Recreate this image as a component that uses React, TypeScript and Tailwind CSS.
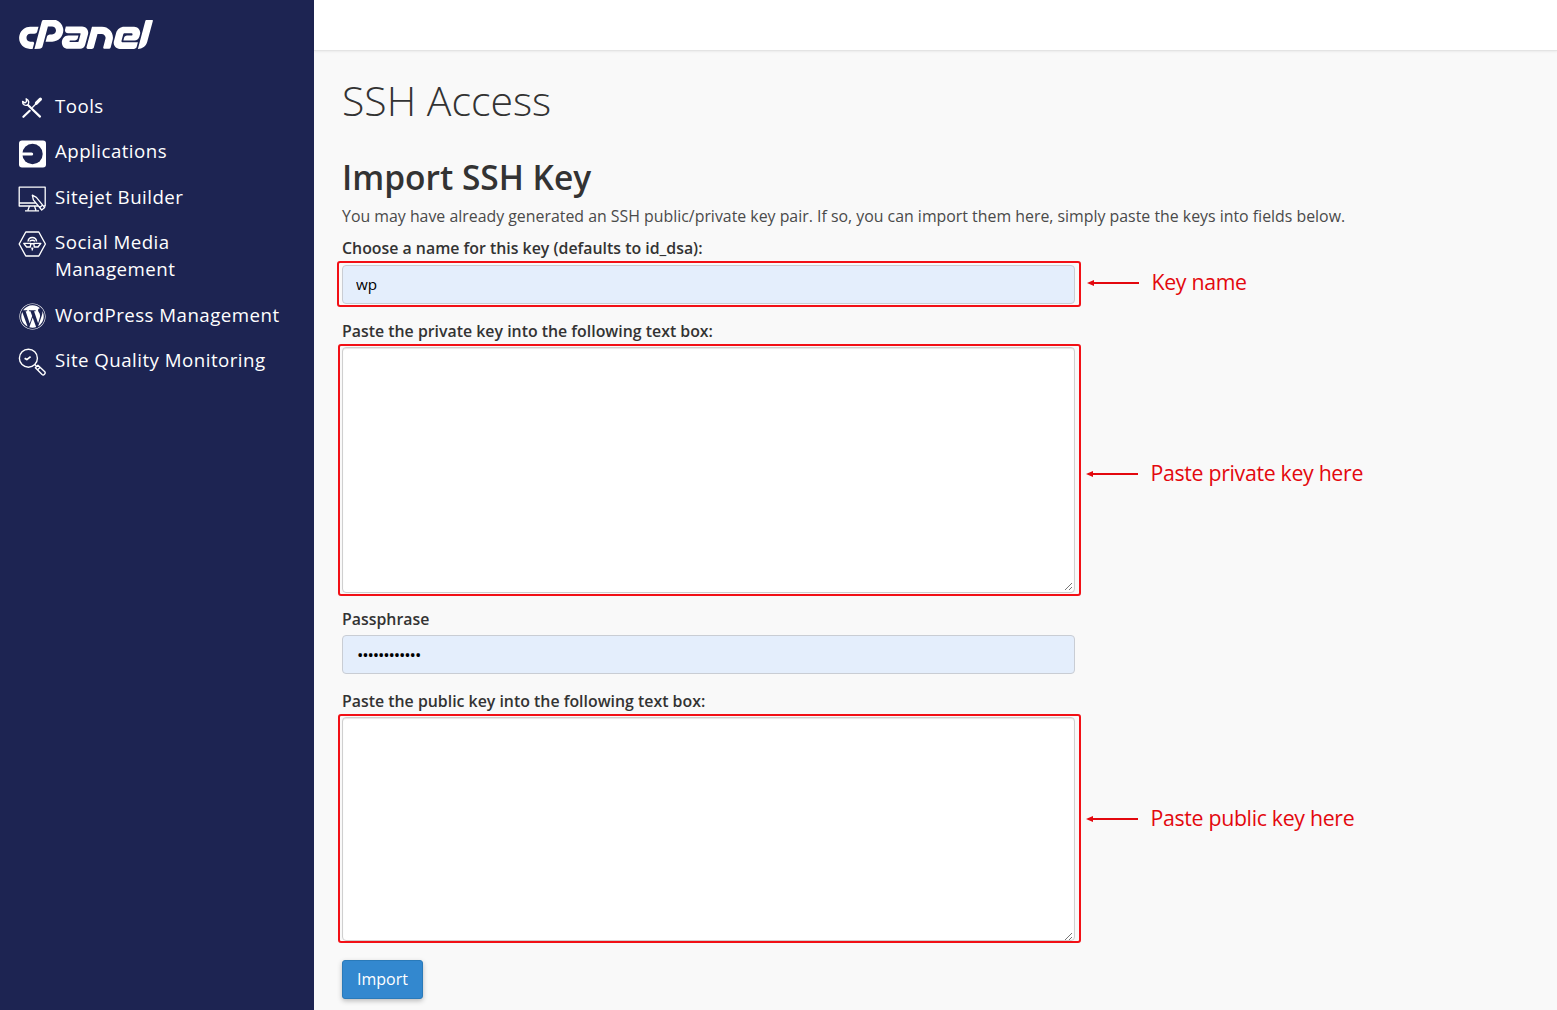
import React from 'react';
import { FaCpanel, FaWordpress } from 'react-icons/fa';

const ToolsIcon = () => (
  <svg viewBox="0 0 28 28" className="h-7 w-7" fill="none" stroke="currentColor" strokeLinecap="round">
    <path d="M10.2 11.2L22 22.6" strokeWidth="2.2" />
    <path d="M4.6 7.4c-.3 2.9 2.4 4.8 5.2 3.6 1.8-2.2 1-5.2-1.6-6.2l.4 2.6-1.7 1.5z" strokeWidth="1.4" strokeLinejoin="round" />
    <path d="M5.4 22.8l6.3-6" strokeWidth="2.2" />
    <path d="M14.6 13.2l3-3" strokeWidth="1.3" />
    <path d="M18.4 9.2l4-4" strokeWidth="3.2" />
  </svg>
);

const ApplicationsIcon = () => (
  <svg viewBox="0 0 28 28" className="h-7 w-7">
    <rect x="1" y="0.5" width="27" height="27" rx="3" fill="#fff" />
    <circle cx="14.5" cy="14" r="10.2" fill="#1d2452" />
    <path d="M3 12.4h10.6a1.6 1.6 0 0 1 0 3.2H3z" fill="#fff" />
  </svg>
);

const SitejetIcon = () => (
  <svg viewBox="0 0 28 28" className="h-7 w-7" fill="none" stroke="currentColor" strokeWidth="1.3" strokeLinejoin="round">
    <path d="M20 21H1.2V2.2h26V21h-1.5M1.2 18h16.6" />
    <path d="M11.5 21l-1.6 4.2M16.5 21l1.4 4.2M7 25.8h14" />
    <path d="M14.3 10.2l1.1 4.6 8.3 10.2 3-2.4-8.3-10.3zM21.7 22.5l3-2.4" />
  </svg>
);

const SocialIcon = () => (
  <svg viewBox="0 0 28 28" className="h-7 w-7" fill="none" stroke="currentColor" strokeWidth="1.4" strokeLinejoin="round">
    <path d="M7.8 2h13l6.6 12-6.6 12h-13L1.2 14z" />
    <path d="M10 11.5c.3-2.5 2-4 4.3-4s4 1.5 4.3 4" />
    <path d="M11.6 11.4c1-1.6 4.2-1.6 5.4 0" />
    <path d="M5.8 13.4h7l-.5 3.6H8.6zM15.8 13.4h7l-2.8 3.6h-3.7z" />
    <path d="M12.8 13.8h3M14.3 17.5v3M13.3 18.2h2" />
  </svg>
);

const QualityIcon = () => (
  <svg viewBox="0 0 28 28" className="h-7 w-7" fill="none" stroke="currentColor" strokeWidth="1.4" strokeLinejoin="round">
    <circle cx="10.4" cy="10.2" r="9" />
    <path d="M6.6 10.2l2.2 1.4 3.8-3" strokeWidth="1.8" />
    <path d="M16.8 16.6l1.8 1.8" />
    <path d="M17.4 19.8l2.5-2.6 6.9 6.6c1.2 1.4-1.2 4-2.7 2.7zM19.6 21.8l2.4-2.4" />
  </svg>
);

const navItems = [
  { label: 'Tools', icon: <ToolsIcon /> },
  { label: 'Applications', icon: <ApplicationsIcon /> },
  { label: 'Sitejet Builder', icon: <SitejetIcon /> },
  { label: 'Social Media Management', icon: <SocialIcon /> },
  { label: 'WordPress Management', icon: <FaWordpress className="ml-px h-[27px] w-[27px]" /> },
  { label: 'Site Quality Monitoring', icon: <QualityIcon /> },
];

const Sidebar = () => (
  <aside className="w-[314px] shrink-0 bg-[#1d2452] text-white">
    <div className="ml-[18.5px] mt-5 flex h-[31px] w-[134px] items-center justify-center overflow-hidden">
      <FaCpanel className="h-[107px] w-[134px] shrink-0" />
    </div>
    <nav className="mt-[41px] flex flex-col gap-[17.9px]">
      {navItems.map((item) => (
        <a key={item.label} href="#" className="flex pl-[18px]">
          <span className="mt-[2.3px] h-[25px] w-[37px] shrink-0">{item.icon}</span>
          <span className="w-[235px] text-[18.7px] leading-[27.4px] tracking-[0.47px]">
            {item.label === 'Social Media Management' ? <>Social Media<br />Management</> : item.label}
          </span>
        </a>
      ))}
    </nav>
  </aside>
);

const Note = ({ text, className }: { text: string; className: string }) => (
  <div className={`flex h-8 items-center self-start text-[#e3080e] ${className}`}>
    <svg viewBox="0 0 53 10" className="mt-0.5 h-2.5 w-[53px]">
      <path d="M5 5h47" stroke="currentColor" strokeWidth="2" />
      <path d="M0 5l7-3v6z" fill="currentColor" />
    </svg>
    <span className="-mt-px ml-[11.5px] whitespace-nowrap text-[21.3px] tracking-[-0.32px]">{text}</span>
  </div>
);

const KeyBox = ({ className, grip }: { className: string; grip: string }) => (
  <div className={`relative w-[743px] rounded-[3px] border-2 border-[#f21016] px-[2px] pt-px ${className}`}>
    <textarea className="block h-full w-[733px] resize-none rounded-[4px] border border-[#cfcfcf] bg-white shadow-[inset_0_1px_1px_rgba(0,0,0,0.1)]" />
    <svg viewBox="0 0 9 9" className={`absolute right-[6px] h-[9px] w-[9px] ${grip}`} stroke="#777" fill="none">
      <path d="M1 8l7-7M5 8l3-3" />
    </svg>
  </div>
);

function App() {
  return (
    <div className="flex h-[1010px] w-full overflow-hidden bg-[#f9f9f9] font-['Open_Sans',sans-serif] text-[#333]">
      <Sidebar />

      <div className="min-w-0 flex-1">
        <header className="h-[51px] border-b border-[#e4e4e4] bg-white shadow-[0_1px_2px_rgba(0,0,0,0.06)]" />

        <main className="pl-[28px] pt-[24px]">
          <h1 className="h-[52px] text-[41px] font-light leading-[50px]">SSH Access</h1>
          <h2 className="mt-[26px] h-12 text-[33.5px] font-semibold leading-[48px]">Import SSH Key</h2>
          <p className="h-[30px] whitespace-nowrap text-[15.88px] leading-[30px] text-[#4a4a4a]">
            You may have already generated an SSH public/private key pair. If so, you can import them here, simply paste the keys into fields below.
          </p>

          {/* Key name */}
          <label className="mt-[5px] block h-6 text-[15.88px] font-semibold leading-6">Choose a name for this key (defaults to id_dsa):</label>
          <div className="-ml-[5px] mt-px flex">
            <div className="h-[46px] w-[744px] rounded-[3px] border-2 border-[#f21016] px-[3px] py-[2px]">
              <input defaultValue="wp" className="block h-[39px] w-[733px] rounded-[4px] border border-[#c9cdd4] bg-[#e4eefc] px-[13px] pb-0.5 text-[15.2px] text-black" />
            </div>
            <Note text="Key name" className="ml-[6px] mt-[5px]" />
          </div>

          {/* Private key */}
          <label className="mt-[12px] block h-6 text-[15.88px] font-semibold leading-6">Paste the private key into the following text box:</label>
          <div className="-ml-[4px] mt-px flex">
            <KeyBox className="h-[252px] pb-px" grip="bottom-[3px]" />
            <Note text="Paste private key here" className="ml-[5px] mt-[113px]" />
          </div>

          <label className="mt-[11px] block h-6 text-[15.88px] font-semibold leading-6">Passphrase</label>
          <input
            type="password"
            defaultValue="abcdefghijkl"
            className="mt-1 block h-[39px] w-[733px] rounded-[4px] border border-[#c9cdd4] bg-[#e4eefc] px-[14px] text-[17px] tracking-[-1.13px] text-black"
          />

          {/* Public key */}
          <label className="mt-[15px] block h-6 text-[15.88px] font-semibold leading-6">Paste the public key into the following text box:</label>
          <div className="-ml-[4px] mt-px flex">
            <KeyBox className="h-[229px]" grip="bottom-0" />
            <Note text="Paste public key here" className="ml-[5px] mt-[88px]" />
          </div>

          <button className="mt-[17px] block h-[39px] w-[81px] rounded-[3px] border border-[#2a7ab9] bg-[#3388cf] pb-0.5 text-[16px] text-white shadow-[0_2px_5px_rgba(0,0,0,0.25)]">
            Import
          </button>
        </main>
      </div>
    </div>
  );
}

export default App;
